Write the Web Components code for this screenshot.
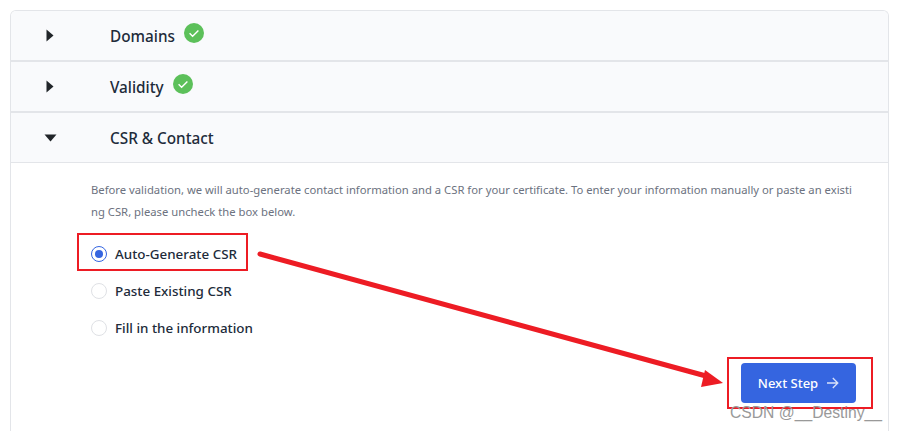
<!DOCTYPE html>
<html>
<head>
<meta charset="utf-8">
<style>
  html, body { margin: 0; padding: 0; background: #fff; }
  body { width: 898px; height: 431px; overflow: hidden; position: relative; font-family: "Noto Sans", "Open Sans", sans-serif; }
</style>
</head>
<body>
<order-card>
  <step-header state="closed" done>Domains</step-header>
  <step-header state="closed" done>Validity</step-header>
  <step-header state="open">CSR &amp; Contact</step-header>
  <step-body>
    <p slot="intro">Before validation, we will auto-generate contact information and a CSR for your certificate. To enter your information manually or paste an existi<br>ng CSR, please uncheck the box below.</p>
    <radio-row checked>Auto-Generate CSR</radio-row>
    <radio-row>Paste Existing CSR</radio-row>
    <radio-row>Fill in the information</radio-row>
    <next-button slot="action">Next Step</next-button>
  </step-body>
</order-card>
<mark-up></mark-up>

<script>
  class OrderCard extends HTMLElement {
    constructor() {
      super();
      this.attachShadow({ mode: 'open' });
      this.shadowRoot.innerHTML = `
        <style>
          :host {
            display: block;
            margin: 10px 9px 0 10px;
            height: 430px;
            box-sizing: border-box;
            border: 1px solid #e3e5e9;
            border-bottom: 0;
            border-radius: 6px 6px 0 0;
            overflow: hidden;
          }
        </style>
        <slot></slot>
      `;
    }
  }

  class StepHeader extends HTMLElement {
    constructor() {
      super();
      this.attachShadow({ mode: 'open' });
    }

    connectedCallback() {
      const open = this.getAttribute('state') === 'open';
      const caret = open
        ? '<svg width="13" height="8" viewBox="0 0 13 8"><path d="M0.5 0.5h12L6.5 7.5z" fill="#212529"/></svg>'
        : '<svg width="8" height="13" viewBox="0 0 8 13"><path d="M0.5 0.5v12l7-6z" fill="#212529"/></svg>';
      const check = this.hasAttribute('done')
        ? `<svg class="check" width="20" height="20" viewBox="0 0 20 20"><circle cx="10" cy="10" r="10" fill="#5cc05a"/><path d="M5.6 10.2l3 3 5.8-5.8" fill="none" stroke="#fff" stroke-width="1.4"/></svg>`
        : '';
      this.shadowRoot.innerHTML = `
        <style>
          :host {
            display: flex;
            align-items: center;
            height: 49px;
            background: #f9fafc;
            border-bottom: ${open ? 1 : 2}px solid #e3e5e9;
            color: #212b3a;
            font-size: 15.3px;
            font-weight: 500;
          }
          .caret { width: 99px; display: flex; justify-content: center; margin-top: 0; box-sizing: border-box; padding-right: 21px; }
          .check { margin: -6px 0 0 9.5px; }
        </style>
        <span class="caret">${caret}</span>
        <span class="text"><slot></slot></span>
        ${check}
      `;
    }
  }

  class StepBody extends HTMLElement {
    constructor() {
      super();
      this.attachShadow({ mode: 'open' });
      this.shadowRoot.innerHTML = `
        <style>
          :host { display: block; padding: 16px 30px 0 80px; }
          ::slotted(p) {
            margin: 0 0 12px;
            font-size: 11.27px;
            line-height: 22px;
            color: #6c7280;
            white-space: nowrap;
          }
          .action { display: flex; justify-content: flex-end; margin: 17px 2px 0 0; }
        </style>
        <slot name="intro"></slot>
        <slot></slot>
        <div class="action"><slot name="action"></slot></div>
      `;
    }
  }

  class RadioRow extends HTMLElement {
    constructor() {
      super();
      this.attachShadow({ mode: 'open' });
    }

    connectedCallback() {
      const on = this.hasAttribute('checked');
      this.shadowRoot.innerHTML = `
        <style>
          :host {
            display: flex;
            align-items: center;
            gap: 8px;
            height: 37px;
            font-size: 13.4px;
            font-weight: 500;
            color: #212b3a;
          }
          .dot {
            width: 16px;
            height: 16px;
            box-sizing: border-box;
            border-radius: 50%;
            border: 1px solid ${on ? '#3565e0' : '#dfe1e5'};
            background: #fff;
            display: flex;
            align-items: center;
            justify-content: center;
          }
          .dot i { width: 8px; height: 8px; border-radius: 50%; background: #3565e0; }
        </style>
        <span class="dot">${on ? '<i></i>' : ''}</span>
        <slot></slot>
      `;
    }
  }

  class NextButton extends HTMLElement {
    constructor() {
      super();
      this.attachShadow({ mode: 'open' });
      this.shadowRoot.innerHTML = `
        <style>
          :host {
            display: inline-flex;
            align-items: center;
            justify-content: center;
            gap: 8px;
            width: 115px;
            height: 40px;
            border-radius: 4px;
            background: #3565e0;
            color: #fff;
            font-size: 13px;
            font-weight: 500;
          }
        </style>
        <slot></slot>
        <svg width="13" height="12" viewBox="0 0 13 12"><path d="M1 6h10.5M6.8 1l5 5-5 5" fill="none" stroke="#d9e2f9" stroke-width="1.3"/></svg>
      `;
    }
  }

  // screenshot annotations: red boxes, arrow and watermark lie over the page
  class MarkUp extends HTMLElement {
    constructor() {
      super();
      this.attachShadow({ mode: 'open' });
      this.shadowRoot.innerHTML = `
        <style>
          :host { display: block; position: absolute; left: 0; top: 0; width: 898px; height: 431px; pointer-events: none; }
          .box { position: absolute; box-sizing: border-box; border: 2px solid #ed1c24; }
          svg { position: absolute; left: 0; top: 0; }
          .wm { position: absolute; left: 730px; top: 404px; font: 15.7px "Liberation Sans", sans-serif; color: #999; white-space: nowrap; }
        </style>
        <div class="box" style="left:77px;top:233px;width:171px;height:38px"></div>
        <div class="box" style="left:727px;top:357px;width:146px;height:52px"></div>
        <svg width="898" height="431" viewBox="0 0 898 431">
          <path d="M260 254L706 376" stroke="#ed1c24" stroke-width="5" stroke-linecap="round" fill="none"/>
          <path d="M723 383L705 370L701 387z" fill="#ed1c24"/>
        </svg>
        <span class="wm">CSDN @__Destiny__</span>
      `;
    }
  }

  customElements.define('order-card', OrderCard);
  customElements.define('step-header', StepHeader);
  customElements.define('step-body', StepBody);
  customElements.define('radio-row', RadioRow);
  customElements.define('next-button', NextButton);
  customElements.define('mark-up', MarkUp);
</script>
</body>
</html>
